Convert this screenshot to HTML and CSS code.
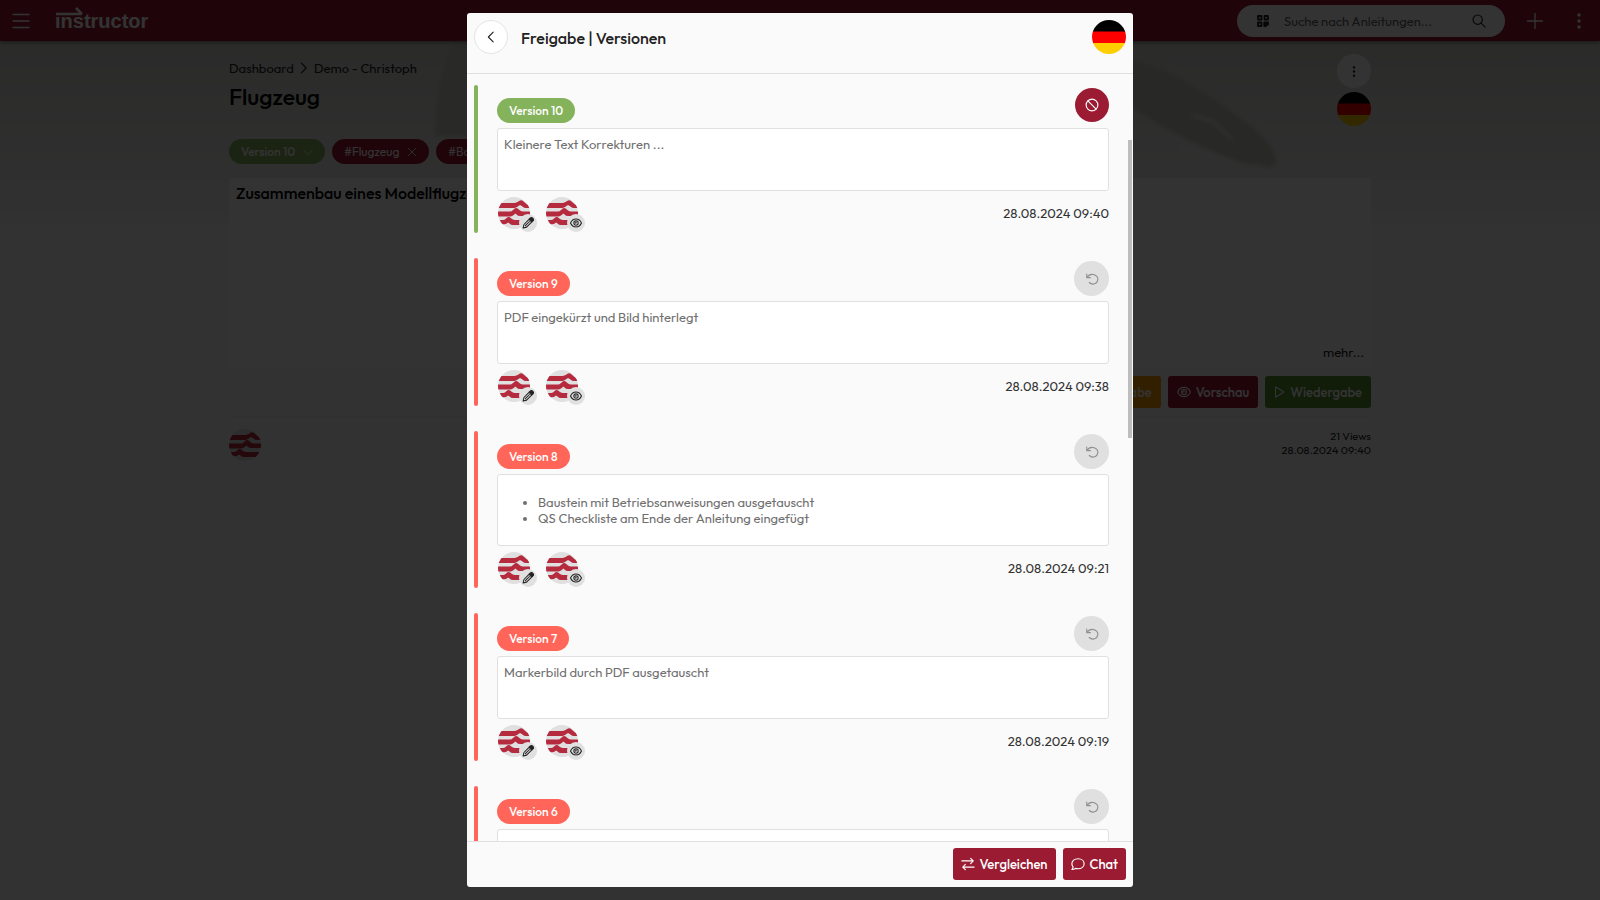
FILE: index.html
```html
<!DOCTYPE html>
<html lang="de">
<head>
    <meta charset="UTF-8">
    <meta name="viewport" content="width=device-width, initial-scale=1.0">
    <title>Flugzeug - instructor</title>
    <link rel="stylesheet" href="styles.css">
</head>
<body>

    <!-- Shared icons -->
    <svg class="sprite" aria-hidden="true">
        <symbol id="i-menu" viewBox="0 0 18 16"><path d="M1 1.5h16M1 8h16M1 14.5h16"/></symbol>
        <symbol id="i-left" viewBox="0 0 16 16"><path d="M10.5 2.5L5 8l5.5 5.5"/></symbol>
        <symbol id="i-right" viewBox="0 0 16 16"><path d="M5 2.5L10.5 8 5 13.5"/></symbol>
        <symbol id="i-down" viewBox="0 0 16 16"><path d="M1 5l7 7 7-7"/></symbol>
        <symbol id="i-close" viewBox="0 0 16 16"><path d="M2 2l12 12M14 2L2 14"/></symbol>
        <symbol id="i-plus" viewBox="0 0 16 16"><path d="M8 0v16M0 8h16"/></symbol>
        <symbol id="i-dots" viewBox="0 0 4 16"><circle cx="2" cy="2" r="1.7"/><circle cx="2" cy="8" r="1.7"/><circle cx="2" cy="14" r="1.7"/></symbol>
        <symbol id="i-search" viewBox="0 0 16 16"><circle cx="6.5" cy="6.5" r="5.3"/><path d="M10.5 10.5l4.5 4.5"/></symbol>
        <symbol id="i-qr" viewBox="0 0 12 12"><path d="M1 1h3.500v3.500H1zM7.500 1H11v3.500H7.500zM1 7.500h3.500V11H1z"/><path class="solid" d="M7.300 7.300H11v2.400H9V11H7.300z"/></symbol>
        <symbol id="i-ban" viewBox="0 0 16 16"><circle cx="8" cy="8" r="6.700"/><path d="M3.300 3.300l9.400 9.400"/></symbol>
        <symbol id="i-undo" viewBox="0 0 16 16"><path d="M2 2.300v4.200h4.200M2.300 6.300C4 3.500 7.500 2.200 10.500 3.100c2.900 1 4.500 3.700 4 6.300-.6 2.700-2.900 4.400-5.400 4.400-1.700 0-3.200-.7-4.200-1.800"/></symbol>
        <symbol id="i-swap" viewBox="0 0 16 16"><path d="M1 4.500h13M11 1.500l3 3-3 3M15 11.500H2M5 8.500l-3 3 3 3"/></symbol>
        <symbol id="i-chat" viewBox="0 0 16 16"><path d="M8 2c4 0 7 2.400 7 5.700s-3 5.700-7 5.700c-1 0-1.900-.1-2.700-.4C4.200 13.800 2.700 14.300 1 14.300c.8-.9 1.300-1.800 1.400-2.900C1.500 10.400 1 9.100 1 7.700 1 4.400 4 2 8 2z"/></symbol>
        <symbol id="i-eye" viewBox="0 0 16 16"><path d="M.7 8c1.500-3.400 4.200-5.300 7.300-5.300s5.800 1.900 7.300 5.300c-1.500 3.400-4.200 5.300-7.300 5.300S2.200 11.400.7 8z"/><circle cx="8" cy="8" r="2.900"/><path d="M8 6.500v1.500H6.500"/></symbol>
        <symbol id="i-play" viewBox="0 0 12 16"><path d="M1.500 2v12L11 8z"/></symbol>
        <symbol id="i-pencil" viewBox="0 0 16 16"><path class="solid" d="M11.200 1.300c.8-.8 1.900-.8 2.700 0l.9.900c.7.800.7 1.900 0 2.700L13 6.700 9.300 3z"/><path d="M9 3.600L2.600 10 1.500 14.600 6.100 13.500 12.500 7.100M4.500 11.500l5.500-5.500"/></symbol>
        <symbol id="i-avatar" viewBox="0 0 32 32">
            <clipPath id="round"><circle cx="16" cy="16" r="16"/></clipPath>
            <g clip-path="url(#round)">
                <rect class="avatar-bg" width="32" height="32"/>
                <path class="avatar-wave" d="M0 6h16q2 0 3.500-1l2.500-1.500q1.500-.8 3 .5l4 3.500h3v3.500h-4q-2 0-3.500-1.500L22 8l-3 2q-1.500 1-3 1H0z"/>
                <path class="avatar-wave" d="M0 14.500h12q1.500 0 3-1.500l2-1.700q1.500-.8 3 .5l2 1.700q1.500 1 3 1h7V19H22q-2 0-3.500-1.500l-1-.9-2.500 2q-1.500 1-3 1H0z"/>
                <path class="avatar-wave" d="M2 23h3q1.500 0 2.500-1l2-1.800q1.500-.8 3 .5l1.500 1.300q1.500 1 3 1h15v5H15q-2 0-3.500-1.500l-1.500-1-2 1.500-5 .5z"/>
            </g>
        </symbol>
        <symbol id="i-flag" viewBox="0 0 34 34">
            <clipPath id="flag-round"><circle cx="17" cy="17" r="17"/></clipPath>
            <g clip-path="url(#flag-round)">
                <rect class="flag-black" width="34" height="12"/>
                <rect class="flag-red" y="11.5" width="34" height="12"/>
                <rect class="flag-gold" y="23" width="34" height="11"/>
            </g>
        </symbol>
    </svg>

    <!-- Page -->
    <header class="topbar">
        <button class="icon-btn menu" aria-label="Menü"><svg class="icon"><use href="#i-menu"/></svg></button>
        <a class="logo" href="#">instructor
            <svg class="logo-arrow" viewBox="0 0 28 12"><path d="M1 5h26M21-1l6 6"/></svg>
        </a>
        <form class="search">
            <svg class="icon qr"><use href="#i-qr"/></svg>
            <input type="search" aria-label="Suche" placeholder="Suche nach Anleitungen...">
            <button type="button" class="icon-btn" aria-label="Suchen"><svg class="icon"><use href="#i-search"/></svg></button>
        </form>
        <button class="icon-btn add" aria-label="Neu"><svg class="icon"><use href="#i-plus"/></svg></button>
        <button class="icon-btn more" aria-label="Mehr"><svg class="icon"><use href="#i-dots"/></svg></button>
    </header>

    <main class="page">
        <svg class="hero" viewBox="0 0 1600 184" preserveAspectRatio="none" aria-hidden="true">
            <defs>
                <linearGradient id="sky" x1="0" y1="0" x2="0" y2="1">
                    <stop offset="0" stop-color="#d4d4d0"/>
                    <stop offset="1" stop-color="#f4f4f4"/>
                </linearGradient>
                <filter id="soft"><feGaussianBlur stdDeviation="2"/></filter>
            </defs>
            <rect width="1600" height="184" fill="url(#sky)"/>
            <g filter="url(#soft)">
                <path fill="#cacac5" d="M435 95Q437 30 455 0h120v95z"/>
                <path fill="#c6c6c0" d="M1120 15Q1180 30 1230 70q45 30 46 50-5 12-30 3-60-20-126-65z"/>
                <path stroke="#efefef" stroke-width="3" fill="none" d="M1180 106q40 18 84 20M1192 74l20 6 20 18"/>
            </g>
        </svg>
        <div class="content">
            <div class="page-head">
                <div>
                    <nav class="breadcrumb">
                        <a href="#">Dashboard</a>
                        <svg class="icon"><use href="#i-right"/></svg>
                        <a href="#">Demo - Christoph</a>
                    </nav>
                    <h1>Flugzeug</h1>
                </div>
                <div class="page-actions">
                    <button class="round" aria-label="Optionen"><svg class="icon dots"><use href="#i-dots"/></svg></button>
                    <button class="flag-btn" aria-label="Deutsch"><svg class="flag"><use href="#i-flag"/></svg></button>
                </div>
            </div>
            <div class="chips">
                <button class="chip green">Version 10 <svg class="icon"><use href="#i-down"/></svg></button>
                <button class="chip red">#Flugzeug <svg class="icon"><use href="#i-close"/></svg></button>
                <button class="chip red">#Bausatz <svg class="icon"><use href="#i-close"/></svg></button>
            </div>
            <section class="card">
                <h2>Zusammenbau eines Modellflugzeugs</h2>
                <a class="more-link" href="#">mehr...</a>
            </section>
            <div class="toolbar">
                <button class="btn orange">Freigabe</button>
                <button class="btn"><svg class="icon"><use href="#i-eye"/></svg>Vorschau</button>
                <button class="btn dark-green"><svg class="icon play"><use href="#i-play"/></svg>Wiedergabe</button>
            </div>
            <div class="meta">
                <svg class="avatar-img"><use href="#i-avatar"/></svg>
                <p>21 Views<br>28.08.2024 09:40</p>
            </div>
        </div>
    </main>

    <!-- Release dialog -->
    <div class="overlay">
        <div class="modal" role="dialog" aria-labelledby="modal-title">
            <div class="modal-header">
                <button class="round back" aria-label="Zurück"><svg class="icon"><use href="#i-left"/></svg></button>
                <h2 id="modal-title">Freigabe | Versionen</h2>
                <button class="flag-btn" aria-label="Deutsch"><svg class="flag"><use href="#i-flag"/></svg></button>
            </div>

            <div class="modal-body">
                <article class="version active">
                    <div class="version-head">
                        <span class="badge">Version 10</span>
                        <button class="state ban" aria-label="Sperren"><svg class="icon"><use href="#i-ban"/></svg></button>
                    </div>
                    <div class="note">Kleinere Text Korrekturen ...</div>
                    <div class="version-foot">
                        <span class="avatar"><svg class="avatar-img"><use href="#i-avatar"/></svg><span class="role"><svg class="icon"><use href="#i-pencil"/></svg></span></span>
                        <span class="avatar"><svg class="avatar-img"><use href="#i-avatar"/></svg><span class="role"><svg class="icon"><use href="#i-eye"/></svg></span></span>
                        <time>28.08.2024 09:40</time>
                    </div>
                </article>

                <article class="version">
                    <div class="version-head">
                        <span class="badge">Version 9</span>
                        <button class="state" aria-label="Wiederherstellen"><svg class="icon"><use href="#i-undo"/></svg></button>
                    </div>
                    <div class="note">PDF eingekürzt und Bild hinterlegt</div>
                    <div class="version-foot">
                        <span class="avatar"><svg class="avatar-img"><use href="#i-avatar"/></svg><span class="role"><svg class="icon"><use href="#i-pencil"/></svg></span></span>
                        <span class="avatar"><svg class="avatar-img"><use href="#i-avatar"/></svg><span class="role"><svg class="icon"><use href="#i-eye"/></svg></span></span>
                        <time>28.08.2024 09:38</time>
                    </div>
                </article>

                <article class="version">
                    <div class="version-head">
                        <span class="badge">Version 8</span>
                        <button class="state" aria-label="Wiederherstellen"><svg class="icon"><use href="#i-undo"/></svg></button>
                    </div>
                    <div class="note">
                        <ul>
                            <li>Baustein mit Betriebsanweisungen ausgetauscht</li>
                            <li>QS Checkliste am Ende der Anleitung eingefügt</li>
                        </ul>
                    </div>
                    <div class="version-foot">
                        <span class="avatar"><svg class="avatar-img"><use href="#i-avatar"/></svg><span class="role"><svg class="icon"><use href="#i-pencil"/></svg></span></span>
                        <span class="avatar"><svg class="avatar-img"><use href="#i-avatar"/></svg><span class="role"><svg class="icon"><use href="#i-eye"/></svg></span></span>
                        <time>28.08.2024 09:21</time>
                    </div>
                </article>

                <article class="version">
                    <div class="version-head">
                        <span class="badge">Version 7</span>
                        <button class="state" aria-label="Wiederherstellen"><svg class="icon"><use href="#i-undo"/></svg></button>
                    </div>
                    <div class="note">Markerbild durch PDF ausgetauscht</div>
                    <div class="version-foot">
                        <span class="avatar"><svg class="avatar-img"><use href="#i-avatar"/></svg><span class="role"><svg class="icon"><use href="#i-pencil"/></svg></span></span>
                        <span class="avatar"><svg class="avatar-img"><use href="#i-avatar"/></svg><span class="role"><svg class="icon"><use href="#i-eye"/></svg></span></span>
                        <time>28.08.2024 09:19</time>
                    </div>
                </article>

                <article class="version">
                    <div class="version-head">
                        <span class="badge">Version 6</span>
                        <button class="state" aria-label="Wiederherstellen"><svg class="icon"><use href="#i-undo"/></svg></button>
                    </div>
                    <div class="note"></div>
                </article>
                <div class="scroll-thumb"></div>
            </div>

            <div class="modal-footer">
                <button class="btn"><svg class="icon"><use href="#i-swap"/></svg>Vergleichen</button>
                <button class="btn"><svg class="icon"><use href="#i-chat"/></svg>Chat</button>
            </div>
        </div>
    </div>

</body>
</html>
```
FILE: styles.css
```css
/* General */
* {
    box-sizing: border-box;
}

body {
    margin: 0;
    height: 100vh;
    overflow: hidden;
    background: #fafafa;
    color: #222;
    font-family: Outfit, Lato, sans-serif;
    font-size: 13px;
    line-height: 16px;
}

h1, h2, p {
    margin: 0;
}

a {
    color: inherit;
    text-decoration: none;
}

button {
    font: inherit;
    color: inherit;
    border: none;
    padding: 0;
    background: none;
    cursor: pointer;
}

.sprite {
    position: absolute;
    width: 0;
    height: 0;
}

.icon {
    display: block;
    flex: none;
    width: 14px;
    height: 14px;
    fill: none;
    stroke: currentColor;
    stroke-width: 1.3;
    stroke-linecap: round;
    stroke-linejoin: round;
}

.solid {
    fill: currentColor;
}

.avatar-bg { fill: #e0e0e0; }
.avatar-wave { fill: #b52a3c; }
.flag-black { fill: #000; }
.flag-red { fill: #f00; }
.flag-gold { fill: #ffce00; }

/* Top bar */
.topbar {
    position: relative;
    z-index: 1;
    display: flex;
    align-items: center;
    height: 41px;
    padding: 0 19px 0 12px;
    background: #9b1b33;
    color: #fff;
    box-shadow: 0 1px 4px rgba(0, 0, 0, 0.5);
}

.menu .icon {
    width: 18px;
    height: 16px;
}

.logo {
    position: relative;
    margin-left: 25px;
    font: bold 20px/24px "Liberation Sans", Arial, sans-serif;
}

/* arrow runs over the first three letters */
.logo-arrow {
    position: absolute;
    left: 0;
    top: 0;
    width: 28px;
    height: 12px;
    overflow: visible;
    fill: none;
    stroke: #fff;
    stroke-width: 2.5;
}

.search {
    display: flex;
    align-items: center;
    width: 268px;
    height: 32px;
    margin-left: auto;
    padding: 0 19px 0 20px;
    border-radius: 16px;
    background: #fff;
    color: #222;
}

.search input {
    flex: 1;
    min-width: 0;
    margin: 0 12px 0 15px;
    padding: 0;
    border: none;
    outline: none;
    background: none;
    font: inherit;
}

.search input::placeholder {
    color: #666;
}

.qr {
    width: 12px;
    height: 12px;
    stroke-width: 1.8;
}

.add {
    margin-left: 22px;
}

.add .icon {
    width: 16px;
    height: 16px;
}

.more {
    margin-left: 34px;
}

.more .icon,
.dots {
    width: 4px;
    height: 16px;
    fill: currentColor;
    stroke: none;
}

/* Page behind the dialog */
.page {
    position: relative;
}

.hero {
    position: absolute;
    left: 0;
    top: 0;
    width: 100%;
    height: 184px;
}

.content {
    position: relative;
    max-width: 1142px;
    margin: 0 auto;
    padding-top: 13px;
}

.page-head {
    display: flex;
    justify-content: space-between;
    height: 85px;
}

.breadcrumb {
    display: flex;
    align-items: center;
    gap: 3px;
    padding-top: 6px;
}

h1 {
    margin-top: 7px;
    font-size: 23px;
    line-height: 28px;
    font-weight: 500;
    color: #000;
}

.round {
    display: flex;
    align-items: center;
    justify-content: center;
    width: 34px;
    height: 34px;
    border-radius: 50%;
    background: #fff;
}

.dots {
    height: 11px;
}

.page-actions {
    display: grid;
    gap: 4px;
    align-content: start;
}

.flag,
.flag-btn {
    display: block;
    width: 34px;
    height: 34px;
}

.chips {
    display: flex;
    gap: 7px;
}

.chip {
    display: flex;
    align-items: center;
    gap: 8px;
    height: 25px;
    padding: 0 12px;
    border-radius: 13px;
    font-size: 12px;
    color: #fff;
}

.chip .icon {
    width: 10px;
    height: 10px;
}

.green { background: #85b35c; font-weight: 500; }
.red { background: #9b1b33; }

.card {
    display: flex;
    flex-direction: column;
    justify-content: space-between;
    height: 190px;
    margin-top: 14px;
    padding: 6px 7px 8px;
    background: #fff;
}

.card h2 {
    font-size: 16px;
    line-height: 18px;
    font-weight: 500;
    color: #000;
}

.more-link {
    align-self: flex-end;
}

.toolbar {
    display: flex;
    justify-content: flex-end;
    gap: 7px;
    padding: 8px 0;
    border-bottom: 1px solid #eee;
}

.btn {
    display: flex;
    align-items: center;
    gap: 5px;
    height: 32px;
    padding: 0 8px;
    border-radius: 3px;
    background: #9b1b33;
    color: #fff;
    font-size: 13px;
    font-weight: 500;
}

.toolbar .btn {
    padding: 0 9px;
}

.orange { background: #f59a00; }
.dark-green { background: #558b2f; }

.play {
    width: 11px;
}

.meta {
    display: flex;
    justify-content: space-between;
    padding-top: 12px;
    font-size: 11px;
    line-height: 14px;
    text-align: right;
}

.avatar-img {
    display: block;
    width: 32px;
    height: 32px;
}

/* Dialog */
.overlay {
    position: fixed;
    inset: 0;
    z-index: 10;
    display: flex;
    justify-content: center;
    padding: 13px;
    background: rgba(0, 0, 0, 0.8);
}

.modal {
    display: flex;
    flex-direction: column;
    width: 100%;
    max-width: 666px;
    border-radius: 3px;
    background: #fafafa;
    overflow: hidden;
}

.modal-header {
    display: flex;
    align-items: flex-start;
    height: 61px;
    padding: 7px;
    border-bottom: 1px solid #e0e0e0;
}

.modal-header h2 {
    flex: 1;
    margin-left: 13px;
    font-size: 16px;
    line-height: 36px;
    font-weight: 500;
}

.back {
    border: 1px solid #e4e4e4;
}

.modal-body {
    position: relative;
    flex: 1;
    min-height: 0;
    padding: 11px 24px 0 7px;
    overflow: hidden;
}

.scroll-thumb {
    position: absolute;
    top: 66px;
    right: 1px;
    width: 4px;
    height: 298px;
    background: #bdbdbd;
}

.version {
    position: relative;
    margin-bottom: 25px;
    padding-left: 23px;
}

/* coloured status bar */
.version::before {
    content: "";
    position: absolute;
    left: 0;
    top: 0;
    bottom: 0;
    width: 4px;
    border-radius: 2px;
    background: #ff6659;
}

.version.active::before,
.active .badge {
    background: #85b35c;
}

.version-head {
    display: flex;
    align-items: flex-end;
    justify-content: space-between;
    height: 38px;
}

.badge {
    padding: 0 12px;
    border-radius: 13px;
    background: #ff6659;
    color: #fff;
    font-size: 12px;
    line-height: 25px;
    font-weight: 500;
}

.state {
    display: flex;
    align-items: center;
    justify-content: center;
    width: 35px;
    height: 35px;
    border-radius: 50%;
    background: #e0e0e0;
    color: #909090;
}

.ban {
    width: 34px;
    height: 34px;
    margin-bottom: 1px;
    background: #9b1b33;
    color: #fff;
}

.note {
    min-height: 63px;
    margin-top: 5px;
    padding: 7px 6px;
    border: 1px solid #e0e0e0;
    border-radius: 3px;
    background: #fff;
    color: #707070;
}

.note ul {
    margin: 12px 0;
    padding-left: 34px;
}

.version-foot {
    display: flex;
    gap: 16px;
    height: 42px;
    padding: 6px 0 0 1px;
}

.avatar {
    position: relative;
    height: 32px;
}

.role {
    position: absolute;
    left: 21px;
    top: 17px;
    display: flex;
    align-items: center;
    justify-content: center;
    width: 18px;
    height: 18px;
    border-radius: 50%;
    background: #e0e0e0;
    color: #222;
}

.role .icon {
    width: 12px;
    height: 12px;
    stroke-width: 1.4;
}

time {
    margin-left: auto;
    line-height: 32px;
    color: #333;
}

.modal-footer {
    display: flex;
    justify-content: flex-end;
    gap: 7px;
    padding: 6px 7px 7px;
    border-top: 1px solid #e0e0e0;
}
```
